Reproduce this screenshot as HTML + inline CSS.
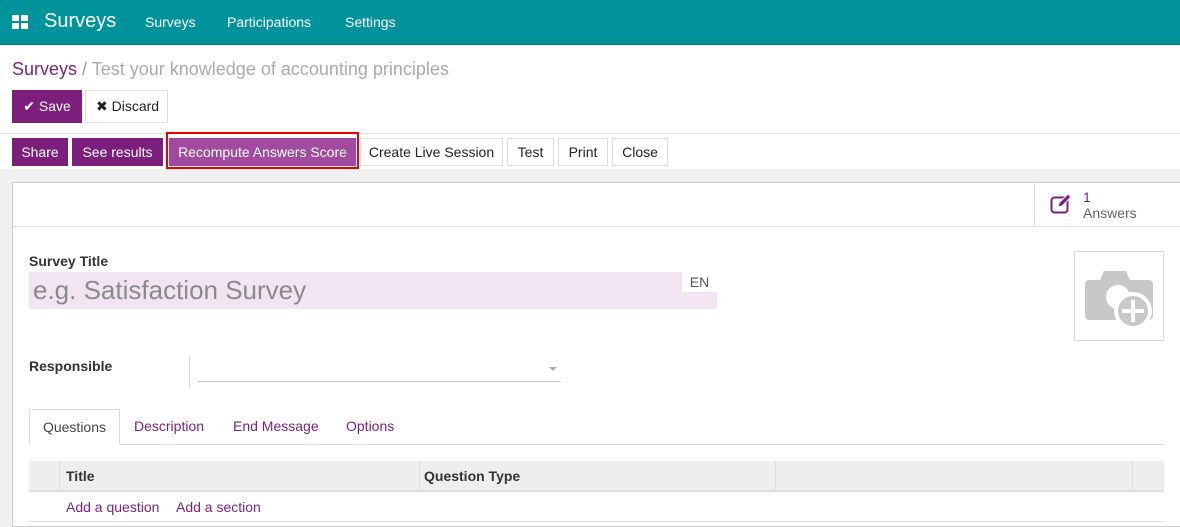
<!DOCTYPE html><html><head><style>
*{box-sizing:border-box}body{margin:0;width:1180px;height:527px;overflow:hidden;font-family:"Liberation Sans",sans-serif;font-size:14px;color:#4c4c4c;background:#fff;position:relative}
.a{position:absolute}
.nav{left:0;top:0;width:1180px;height:45px;background:#00939c;border-bottom:1px solid #00767d;color:#fff}
.btn{position:absolute;height:28px;line-height:26px;padding:0 10px;font-size:14px;border:1px solid #ddd;background:#fff;color:#222;white-space:nowrap;text-align:center}
.p{background:#7c1e7c;border-color:#7c1e7c;color:#fff}
.tab{position:absolute;top:409px;height:36px;line-height:34px;color:#7c1e7c}
</style></head><body>
<div class="a nav">
<svg class="a" style="left:12px;top:15px" width="16" height="14"><rect x="0" y="0" width="7" height="6" fill="#fff"/><rect x="9" y="0" width="7" height="6" fill="#fff"/><rect x="0" y="8" width="7" height="6" fill="#fff"/><rect x="9" y="8" width="7" height="6" fill="#fff"/></svg>
<div class="a" style="left:44px;top:10px;font-size:20px">Surveys</div>
<div class="a" style="left:145px;top:14px">Surveys</div>
<div class="a" style="left:227px;top:14px">Participations</div>
<div class="a" style="left:345px;top:14px">Settings</div>
</div>
<div class="a" style="left:12px;top:59px;font-size:18px;color:#7c1e7c">Surveys <span style="color:#999">/</span> <span style="color:#aaa">Test your knowledge of accounting principles</span></div>
<div class="btn p" style="left:12px;top:90px;width:70px;height:33px;line-height:31px">✔ Save</div>
<div class="btn" style="left:85px;top:90px;width:83px;height:33px;line-height:31px">✖ Discard</div>
<div class="a" style="left:0;top:133px;width:1180px;height:1px;background:#ddd"></div>
<div class="btn p" style="left:12px;top:138px;width:56px;padding:0">Share</div>
<div class="btn p" style="left:72px;top:138px;width:91px;padding:0">See results</div>
<div class="a" style="left:166px;top:132px;width:193px;height:37px;border:2px solid #e00"></div>
<div class="btn" style="left:169px;top:138px;width:187px;padding:0;background:#a24a9e;border-color:#a24a9e;color:#fff">Recompute Answers Score</div>
<div class="btn" style="left:360px;top:138px;width:143px;padding:0">Create Live Session</div>
<div class="btn" style="left:507px;top:138px;width:47px;padding:0">Test</div>
<div class="btn" style="left:558px;top:138px;width:50px;padding:0">Print</div>
<div class="btn" style="left:612px;top:138px;width:56px;padding:0">Close</div>
<div class="a" style="left:0;top:169px;width:1180px;height:358px;background:#f0f0f0"></div>
<div class="a" style="left:12px;top:182px;width:1170px;height:345px;background:#fff;border:1px solid #ccc"></div>
<div class="a" style="left:13px;top:226px;width:1167px;height:1px;background:#ddd"></div>
<div class="a" style="left:1034px;top:183px;width:1px;height:43px;background:#ddd"></div>
<svg class="a" style="left:1050px;top:193px" width="24" height="22"><rect x="1.5" y="4.5" width="16" height="15" rx="3" fill="none" stroke="#7c1e7c" stroke-width="2"/><path d="M8 14l1-4 9-9 3 3-9 9z" fill="#7c1e7c" stroke="#fff" stroke-width="1"/></svg>
<div class="a" style="left:1083px;top:189px;color:#7c1e7c;line-height:16px">1<br><span style="color:#666">Answers</span></div>
<div class="a" style="left:1074px;top:251px;width:90px;height:90px;border:1px solid #ddd"></div>
<svg class="a" style="left:1074px;top:251px" width="90" height="90"><path d="M26 29l4-9h22l4 9h19a4 4 0 0 1 4 4v32a4 4 0 0 1-4 4H15a4 4 0 0 1-4-4V33a4 4 0 0 1 4-4z" fill="#c8c8c8"/><circle cx="44" cy="46" r="12" fill="#fff"/><circle cx="59" cy="60" r="19" fill="#fff"/><circle cx="59" cy="60" r="15" fill="#c8c8c8"/><path d="M59 49v22M48 60h22" stroke="#fff" stroke-width="4"/></svg>
<div class="a" style="left:29px;top:253px;font-weight:bold;font-size:14px;color:#333">Survey Title</div>
<div class="a" style="left:29px;top:272px;width:688px;height:37px;background:#f2e4f0"></div>
<div class="a" style="left:33px;top:275px;font-size:26px;color:#8a8a8a">e.g. Satisfaction Survey</div>
<div class="a" style="left:682px;top:272px;width:35px;height:20px;background:#fff;text-align:center;line-height:20px;color:#555">EN</div>
<div class="a" style="left:29px;top:358px;font-weight:bold;color:#333">Responsible</div>
<div class="a" style="left:189px;top:355px;width:1px;height:34px;background:#ddd"></div>
<div class="a" style="left:198px;top:381px;width:363px;height:1px;background:#ccc"></div>
<div class="a" style="left:549px;top:367px;border:4px solid transparent;border-top-color:#aaa"></div>
<div class="a" style="left:29px;top:444px;width:1135px;height:1px;background:#ddd"></div>
<div class="tab" style="left:29px;width:91px;border:1px solid #ddd;border-bottom-color:#fff;background:#fff;text-align:center;color:#444">Questions</div>
<div class="tab" style="left:134px">Description</div>
<div class="tab" style="left:233px">End Message</div>
<div class="tab" style="left:346px">Options</div>
<div class="a" style="left:29px;top:461px;width:1135px;height:31px;background:#eee;border-bottom:2px solid #ddd"></div>
<div class="a" style="left:59px;top:461px;width:1px;height:31px;background:#ddd"></div>
<div class="a" style="left:419px;top:461px;width:1px;height:31px;background:#ddd"></div>
<div class="a" style="left:775px;top:461px;width:1px;height:31px;background:#ddd"></div>
<div class="a" style="left:1132px;top:461px;width:1px;height:31px;background:#ddd"></div>
<div class="a" style="left:66px;top:468px;font-weight:bold;color:#333">Title</div>
<div class="a" style="left:424px;top:468px;font-weight:bold;color:#333">Question Type</div>
<div class="a" style="left:66px;top:499px;color:#7c1e7c">Add a question</div>
<div class="a" style="left:176px;top:499px;color:#7c1e7c">Add a section</div>
<div class="a" style="left:29px;top:521px;width:1135px;height:1px;background:#ddd"></div>
</body></html>
